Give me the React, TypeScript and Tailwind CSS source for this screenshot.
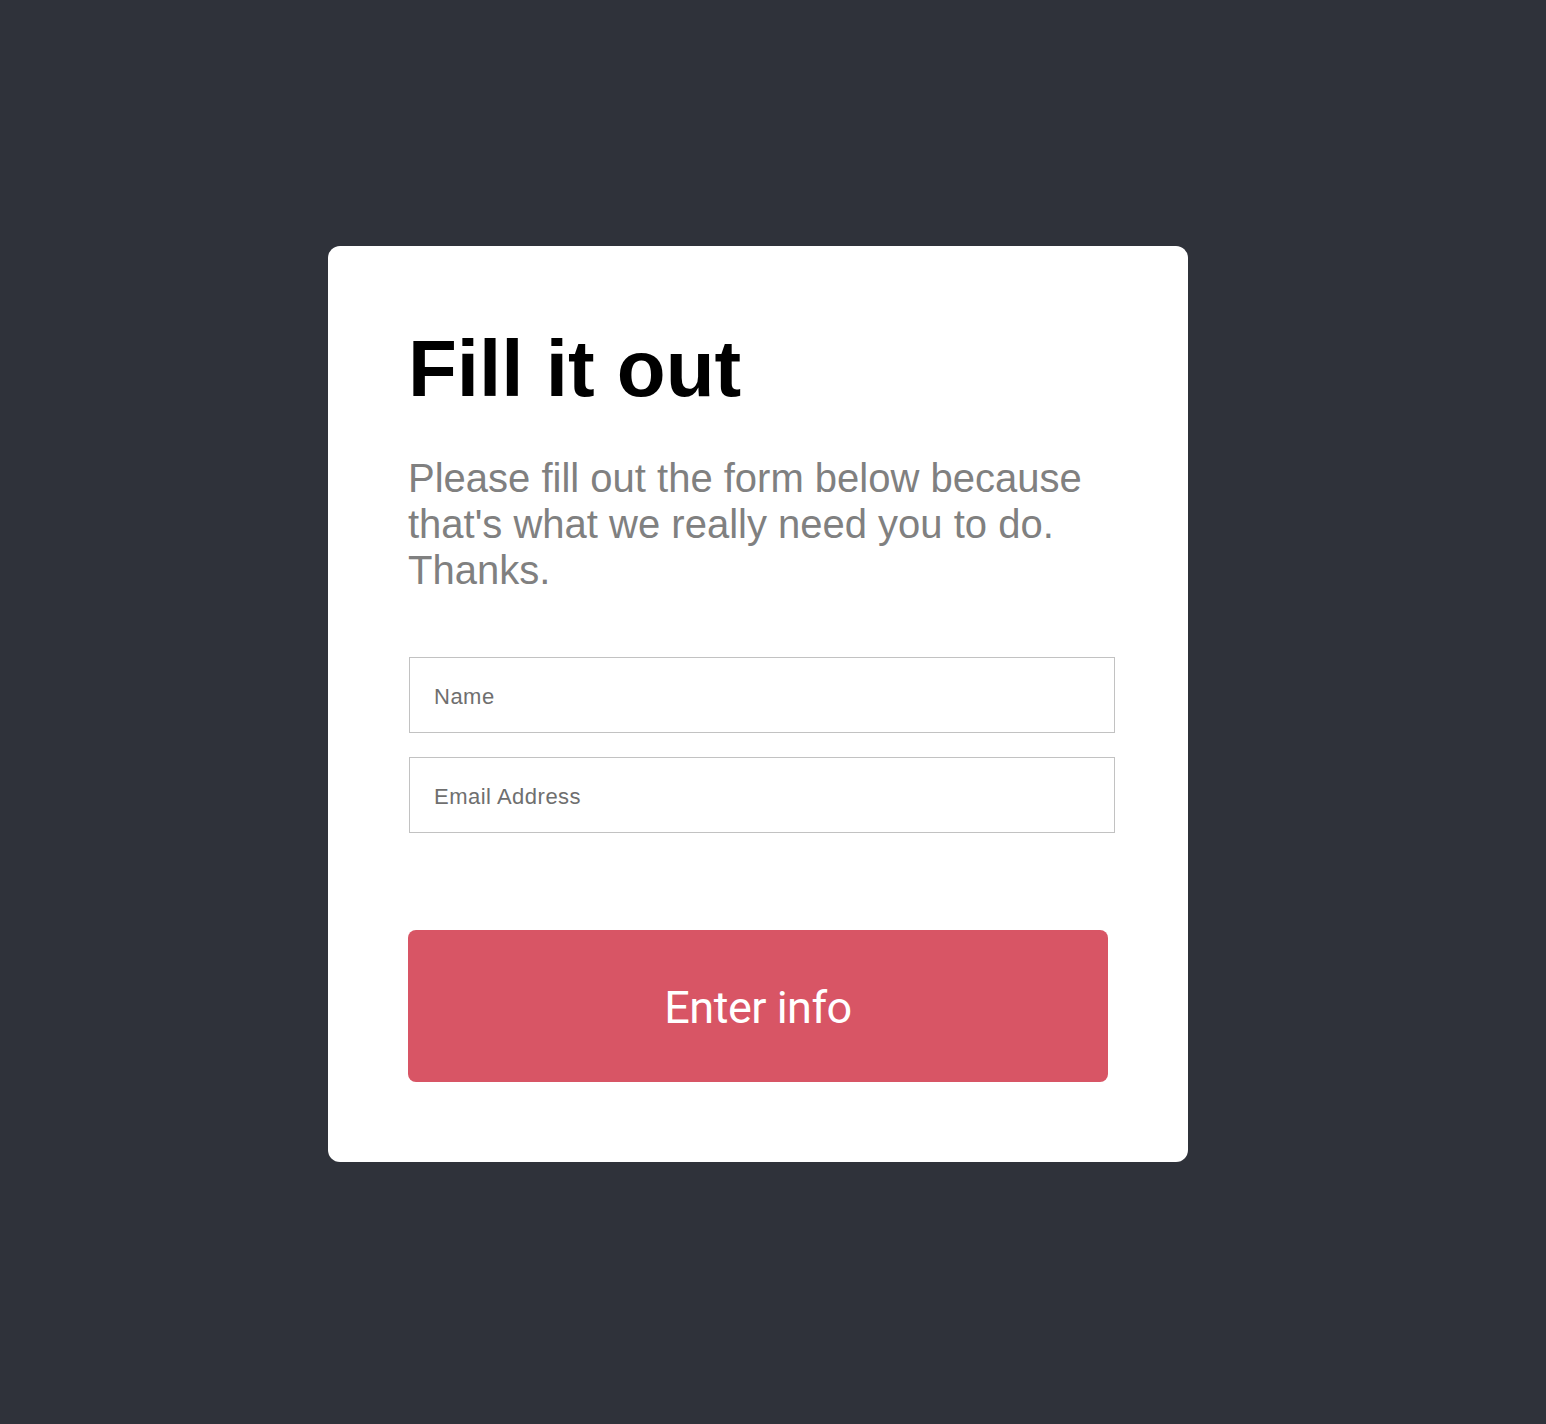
import React from 'react';

const App: React.FC = () => {
  return (
    <div className="min-h-screen bg-[#2f323a] pt-[246px] pl-[328px]" style={{ fontFamily: '"Liberation Sans", Arial, sans-serif' }}>
      <div className="w-[860px] rounded-xl bg-white p-20">
        <h1 className="text-[80px] font-bold leading-[86px] text-black">Fill it out</h1>
        <p className="mt-[43px] text-[40px] leading-[46px] text-[#808080]">
          Please fill out the form below because that's what we really need you to do. Thanks.
        </p>

        <form className="mt-[64px]" onSubmit={(e) => e.preventDefault()}>
          <input
            type="text"
            placeholder="Name"
            className="ml-px block h-[76px] w-[706px] border border-[#c2c2c2] px-6 pt-[3px] text-[22px] tracking-[0.5px] text-[#333] outline-none placeholder:text-[#6f6f6f]"
          />
          <input
            type="email"
            placeholder="Email Address"
            className="ml-px mt-6 block h-[76px] w-[706px] border border-[#c2c2c2] px-6 pt-[3px] text-[22px] tracking-[0.5px] text-[#333] outline-none placeholder:text-[#6f6f6f]"
          />

          <button
            type="submit"
            className="mt-[97px] block h-[152px] w-[700px] rounded-lg bg-[#d85565] pt-1 text-[45px] tracking-[-0.5px] text-white"
            style={{ fontFamily: 'Roboto, "Liberation Sans", sans-serif' }}
          >
            Enter info
          </button>
        </form>
      </div>
    </div>
  );
};

export default App;
